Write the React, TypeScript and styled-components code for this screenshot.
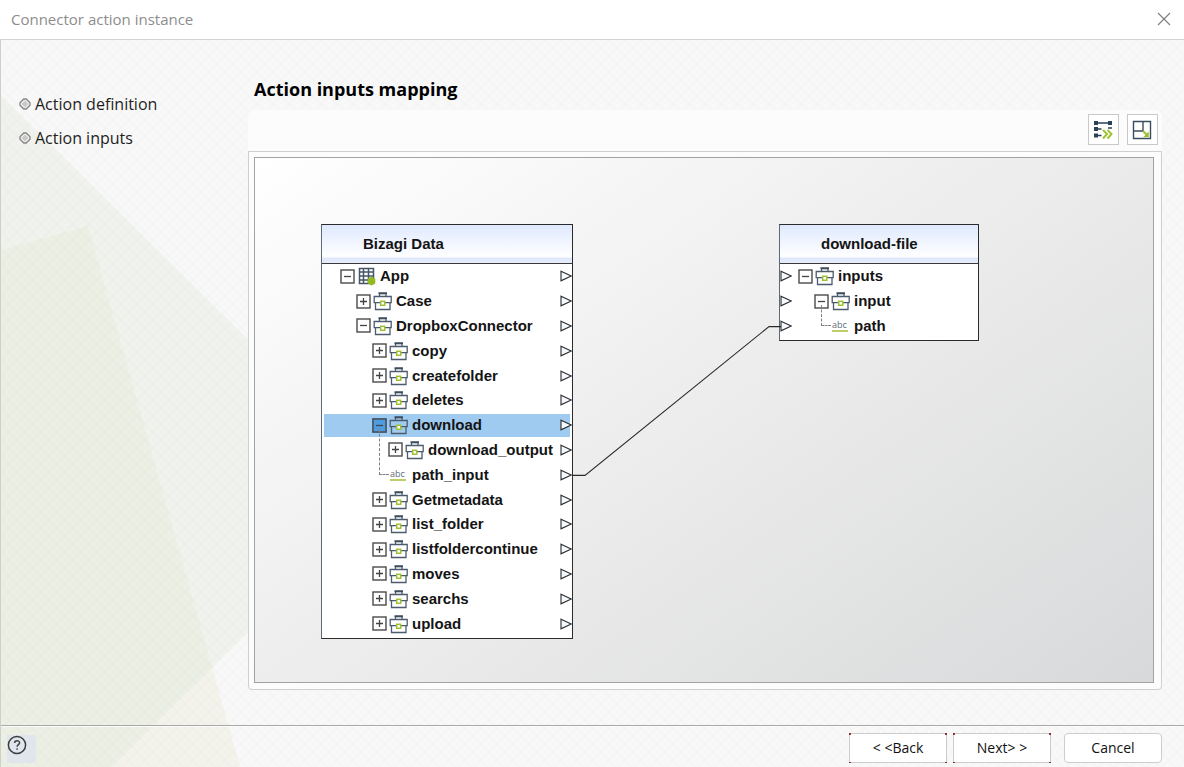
import React from "react";
import styled, { createGlobalStyle, css } from "styled-components";

const GlobalStyle = createGlobalStyle`
  *, *::before, *::after { box-sizing: border-box; }
  html, body, #root { height: 100%; }
  body {
    margin: 0;
    background: #f7f7f7;
    color: #1e1e1e;
    font-family: "Open Sans", "Noto Sans", sans-serif;
  }
  button { font: inherit; color: inherit; cursor: pointer; }
`;

const Dialog = styled.div`
  display: flex;
  flex-direction: column;
  min-height: 100%;
`;

const TitleBar = styled.header`
  display: flex;
  align-items: center;
  justify-content: space-between;
  height: 40px;
  padding: 0 12px 1px 11px;
  background: #fff;
  border-bottom: 1px solid #d2d2d2;
`;

const WindowTitle = styled.span`
  font-size: 15px;
  line-height: 20px;
  color: #8d8d8d;
`;

const CloseButton = styled.button`
  display: flex;
  padding: 1px;
  border: 0;
  background: none;
`;

const Content = styled.div`
  position: relative;
  display: flex;
  flex-direction: column;
  flex: 1;
  border-left: 1px solid #cfd0cc;
  background: #f8f8f8;
`;

const Backdrop = styled.svg`
  position: absolute;
  inset: 0;
  width: 100%;
  height: 100%;
`;

const Body = styled.div`
  position: relative;
  display: flex;
  flex: 1;
  padding-right: 22px;
`;

const Steps = styled.ul`
  flex: none;
  width: 247px;
  margin: 0;
  padding: 52px 0 0 18px;
  list-style: none;
`;

const Step = styled.li`
  display: flex;
  align-items: center;
  gap: 4px;
  height: 24px;
  margin-bottom: 10px;
  font-size: 16px;
  line-height: 24px;
`;

const Main = styled.main`
  display: flex;
  flex-direction: column;
  flex: 1;
  min-width: 0;
  padding-bottom: 35px;
`;

const Heading = styled.h1`
  margin: 37px 0 9px 6px;
  font-size: 18px;
  font-weight: 700;
  line-height: 24px;
  color: #000;
`;

const Toolbar = styled.div`
  display: flex;
  align-items: center;
  justify-content: flex-end;
  gap: 8px;
  height: 41px;
  padding: 0 4px 2px 0;
  border-radius: 6px 6px 0 0;
  background: #fcfcfc;
`;

const ToolButton = styled.button`
  display: flex;
  align-items: center;
  justify-content: center;
  width: 31px;
  height: 31px;
  padding: 0 1px 0 0;
  border: 1px solid #c9c9c9;
  background: #fff;
`;

const Frame = styled.div`
  display: flex;
  flex: 1;
  padding: 5px 7px 6px 5px;
  border: 1px solid #cfcfcf;
  border-radius: 0 0 4px 4px;
  background: #fcfcfc;
`;

const Canvas = styled.div`
  position: relative;
  flex: 1;
  min-height: 526px;
  border: 1px solid #a2a2a2;
  background: linear-gradient(145deg, #ffffff 0%, #efefef 42%, #d8d9da 100%);
  font-family: "Liberation Sans", Arial, sans-serif;
`;

const Link = styled.svg`
  position: absolute;
  left: 317px;
  top: 168px;
  width: 210px;
  height: 150px;
`;

const Node = styled.section<{ $x: number; $width: number; $height: number }>`
  position: absolute;
  left: ${(p) => p.$x}px;
  top: 66px;
  display: flex;
  flex-direction: column;
  width: ${(p) => p.$width}px;
  height: ${(p) => p.$height}px;
  border: 1px solid #2b2b2b;
  border-left-color: #5d6975;
  background: #fff;
  color: #141414;
`;

const NodeTitle = styled.h2`
  flex: none;
  height: 39px;
  margin: 0;
  padding-left: 41px;
  border-bottom: 1px solid #3a3a3a;
  background: linear-gradient(#dfe9fe 0, #ffffff 32px, #dfe8fb 33px, #e6eefd 100%);
  font-size: 15px;
  font-weight: 700;
  line-height: 38px;
`;

const Tree = styled.ul`
  display: flex;
  flex-direction: column;
  flex: 1;
  margin: 0;
  padding: 0 0 2px;
  list-style: none;
`;

const Row = styled.li<{ $level: number; $selected?: boolean }>`
  position: relative;
  display: flex;
  align-items: center;
  flex: 1;
  padding-left: ${(p) => 18 + p.$level * 16}px;
  font-size: 15px;
  font-weight: 700;
  line-height: 20px;
  white-space: nowrap;
  ${(p) =>
    p.$selected &&
    css`
      background: linear-gradient(#a0cbf0, #a0cbf0) center / calc(100% - 4px) 23px no-repeat;
    `}
`;

const Toggle = styled.button<{ $selected?: boolean }>`
  display: flex;
  flex: none;
  width: 15px;
  height: 15px;
  margin-right: 2px;
  padding: 0;
  border: 0;
  background: ${(p) => (p.$selected ? "#4f9be0" : "#fff")};
`;

const TypeIcon = styled.span`
  display: flex;
  flex: none;
  width: 19px;
  margin-right: 4px;
`;

const LeafSpace = styled.span`
  flex: none;
  width: 17px;
`;

const Guide = styled.span<{ $level: number; $rows: number }>`
  position: absolute;
  left: ${(p) => 25 + p.$level * 16}px;
  bottom: 50%;
  width: 10px;
  height: ${(p) => p.$rows * 25 - 4}px;
  border: 1px dashed #808080;
  border-width: 0 0 1px 1px;
`;

const Port = styled.svg<{ $side: "left" | "right" }>`
  position: absolute;
  top: calc(50% - 6px);
  ${(p) => p.$side}: 0;
  width: 12px;
  height: 12px;
`;

const Footer = styled.footer`
  position: relative;
  display: flex;
  align-items: flex-start;
  height: 42px;
  padding: 7px 22px 0 6px;
  border-top: 1px solid #a9a9a9;
  box-shadow: inset 0 1px 0 #fbfbfb;
`;

const HelpButton = styled.button`
  display: flex;
  width: 29px;
  height: 28px;
  margin: 2px auto 0 0;
  padding: 0;
  border: 0;
  background: #e1e6ed;
`;

const FooterButton = styled.button<{ $pinned?: boolean; $gap?: number }>`
  width: 98px;
  height: 30px;
  margin-left: ${(p) => p.$gap ?? 0}px;
  padding: 0;
  border: 1px solid #cdcdcd;
  border-radius: ${(p) => (p.$pinned ? 0 : 4)}px;
  background: #fff;
  color: #111;
  font-size: 14px;
  line-height: 20px;
  ${(p) =>
    p.$pinned &&
    css`
      background:
        linear-gradient(#a33c3c, #a33c3c) left top / 2px 2px no-repeat border-box,
        linear-gradient(#a33c3c, #a33c3c) right top / 2px 2px no-repeat border-box,
        linear-gradient(#a33c3c, #a33c3c) left bottom / 2px 1px no-repeat border-box,
        linear-gradient(#a33c3c, #a33c3c) right bottom / 2px 1px no-repeat border-box,
        #fff;
      border-color: rgba(0, 0, 0, 0.2);
    `}
`;

const Diamond = () => (
  <svg width="12" height="12" viewBox="0 0 12 12" aria-hidden="true">
    <path d="M4.800 1h2.400L11 4.800v2.400L7.200 11H4.800L1 7.200V4.800z" fill="#f1f1f1" stroke="#858585" strokeWidth="1.300" />
    <path d="M6 2.500L9.500 6 6 9.500 2.500 6z" fill="#c9c9c9" />
  </svg>
);

const CaseIcon = () => (
  <svg width="19" height="20" viewBox="0 0 19 20" aria-hidden="true">
    <path d="M6.500 5V2.500h6.500V5M1.200 5.500h17v6.200h-17zM2.500 11.700v6.800h14.500v-6.800" fill="none" stroke="#4c5c6e" strokeWidth="1.300" />
    <path d="M5.500 2.200h8.500" stroke="#3d4c5e" strokeWidth="1.800" />
    <rect x="7.700" y="10.300" width="4" height="4" fill="#fff" stroke="#9fc131" strokeWidth="1.500" />
  </svg>
);

const GridIcon = () => (
  <svg width="19" height="19" viewBox="0 0 19 19" aria-hidden="true">
    <path d="M2.500 1.500h14v15h-14zM6.500 1v16M11.500 1v16M2 5h15M2 9h15M2 13h15" fill="none" stroke="#44566a" strokeWidth="1.500" />
    <path d="M14.500 9.500l3.800 2.200v4.600l-3.800 2.200-3.800-2.200v-4.600z" fill="#93bb1f" />
  </svg>
);

const AbcMark = styled.span`
  width: 16px;
  height: 12px;
  margin-left: 1px;
  border-bottom: 2px solid #bccf6b;
  color: #626c78;
  font-family: "Open Sans", sans-serif;
  font-size: 9px;
  font-weight: 400;
  line-height: 9px;
`;

const PortMark = ({ side }: { side: "left" | "right" }) => (
  <Port $side={side} viewBox="0 0 12 12" aria-hidden="true">
    <path d="M1 1.200L11.300 6 1 10.800z" fill="#f3f9ff" stroke="#2a2a2a" strokeWidth="1.100" />
  </Port>
);

type Item = {
  label: string;
  level: number;
  kind: "grid" | "case" | "text";
  open?: boolean;
  selected?: boolean;
  guide?: number;
};

const source: Item[] = [
  { label: "App", level: 0, kind: "grid", open: true },
  { label: "Case", level: 1, kind: "case" },
  { label: "DropboxConnector", level: 1, kind: "case", open: true },
  { label: "copy", level: 2, kind: "case" },
  { label: "createfolder", level: 2, kind: "case" },
  { label: "deletes", level: 2, kind: "case" },
  { label: "download", level: 2, kind: "case", open: true, selected: true },
  { label: "download_output", level: 3, kind: "case" },
  { label: "path_input", level: 2, kind: "text", guide: 2 },
  { label: "Getmetadata", level: 2, kind: "case" },
  { label: "list_folder", level: 2, kind: "case" },
  { label: "listfoldercontinue", level: 2, kind: "case" },
  { label: "moves", level: 2, kind: "case" },
  { label: "searchs", level: 2, kind: "case" },
  { label: "upload", level: 2, kind: "case" },
];

const target: Item[] = [
  { label: "inputs", level: 0, kind: "case", open: true },
  { label: "input", level: 1, kind: "case", open: true },
  { label: "path", level: 1, kind: "text", guide: 1 },
];

const TreeRow = ({ item, side }: { item: Item; side: "left" | "right" }) => (
  <Row $level={item.level} $selected={item.selected}>
    {item.kind === "text" ? (
      <LeafSpace />
    ) : (
      <Toggle
        type="button"
        $selected={item.selected}
        aria-expanded={!!item.open}
        aria-label={`Toggle ${item.label}`}
      >
        <svg width="15" height="15" viewBox="0 0 15 15" aria-hidden="true">
          <rect x="1" y="1" width="13" height="13" fill="none" stroke="#4a4a4a" strokeWidth="1.400" />
          <path d={item.open ? "M4 7.500h7" : "M4 7.500h7M7.500 4v7"} stroke="#444" strokeWidth="1.300" />
        </svg>
      </Toggle>
    )}
    <TypeIcon>
      {item.kind === "grid" && <GridIcon />}
      {item.kind === "case" && <CaseIcon />}
      {item.kind === "text" && <AbcMark>abc</AbcMark>}
    </TypeIcon>
    {item.guide && <Guide $level={item.level} $rows={item.guide} />}
    {item.label}
    <PortMark side={side} />
  </Row>
);

export default function App() {
  return (
    <>
      <GlobalStyle />
      <Dialog role="dialog" aria-label="Connector action instance">
        <TitleBar>
          <WindowTitle>Connector action instance</WindowTitle>
          <CloseButton type="button" aria-label="Close">
            <svg width="14" height="14" viewBox="0 0 14 14" aria-hidden="true">
              <path d="M1 1l12 12M13 1L1 13" stroke="#7c7c7c" strokeWidth="1.100" />
            </svg>
          </CloseButton>
        </TitleBar>
        <Content>
          <Backdrop aria-hidden="true">
            <defs>
              <pattern id="weave" width="16" height="16" patternUnits="userSpaceOnUse">
                <path d="M0 0l16 16M16 0L0 16" stroke="#000" strokeOpacity="0.016" strokeWidth="1.200" />
              </pattern>
            </defs>
            <path d="M-1 54L276 328v236L108 730H-1z" fill="#f0f3ed" />
            <path d="M-1 210L87 186l153 544H-1z" fill="#d0cf90" fillOpacity="0.110" />
            <rect width="100%" height="100%" fill="url(#weave)" />
          </Backdrop>
          <Body>
            <Steps>
              <Step><Diamond />Action definition</Step>
              <Step><Diamond />Action inputs</Step>
            </Steps>
            <Main>
              <Heading>Action inputs mapping</Heading>
              <Toolbar>
                <ToolButton type="button" aria-label="Automatic mapping">
                  <svg width="20" height="20" viewBox="0 0 20 20" aria-hidden="true">
                    <path d="M3 3h14M3 9h5.500M3 15.500h5.500M15 8h4" stroke="#2e4257" strokeWidth="1.300" />
                    <path d="M1 1h4v4H1zM15 1h4v4h-4zM1 7h4v4H1zM1 13.500h4v4H1z" fill="#2e4257" />
                    <path d="M10 10l4 4-4 4.500M14.500 10l4 4-4 4.500" fill="none" stroke="#a0c334" strokeWidth="2" />
                  </svg>
                </ToolButton>
                <ToolButton type="button" aria-label="Maximize">
                  <svg width="20" height="20" viewBox="0 0 20 20" aria-hidden="true">
                    <path d="M1.500 1.500h17v17h-17zM11 1.500v9.500H1.500" fill="none" stroke="#3a4c60" strokeWidth="1.400" />
                    <path d="M11 11l4 4" stroke="#9cc02c" strokeWidth="2" />
                    <path d="M16.800 11.500v5.500h-5.500z" fill="#9cc02c" />
                  </svg>
                </ToolButton>
              </Toolbar>
              <Frame>
                <Canvas>
                  <Node $x={66} $width={252} $height={415}>
                    <NodeTitle>Bizagi Data</NodeTitle>
                    <Tree>
                      {source.map((item) => (
                        <TreeRow key={item.label} item={item} side="right" />
                      ))}
                    </Tree>
                  </Node>
                  <Node $x={524} $width={200} $height={117}>
                    <NodeTitle>download-file</NodeTitle>
                    <Tree>
                      {target.map((item) => (
                        <TreeRow key={item.label} item={item} side="left" />
                      ))}
                    </Tree>
                  </Node>
                  <Link viewBox="0 0 210 150" aria-hidden="true">
                    <path d="M0 149.400h13L197 .6h12" fill="none" stroke="#2a2a2a" strokeWidth="1.100" />
                  </Link>
                </Canvas>
              </Frame>
            </Main>
          </Body>
          <Footer>
            <HelpButton type="button" aria-label="Help">
              <svg width="20" height="20" viewBox="0 0 20 20" aria-hidden="true">
                <circle cx="10" cy="10" r="8.600" fill="none" stroke="#3c3c3c" strokeWidth="1.500" />
                <path d="M7.600 8c0-3 5-3 5-.2 0 1.900-2.500 1.800-2.500 4M10.100 13.200v1.600" fill="none" stroke="#444" strokeWidth="1.500" />
              </svg>
            </HelpButton>
            <FooterButton type="button" $pinned>&lt; &lt;Back</FooterButton>
            <FooterButton type="button" $pinned $gap={6}>Next&gt; &gt;</FooterButton>
            <FooterButton type="button" $gap={13}>Cancel</FooterButton>
          </Footer>
        </Content>
      </Dialog>
    </>
  );
}
